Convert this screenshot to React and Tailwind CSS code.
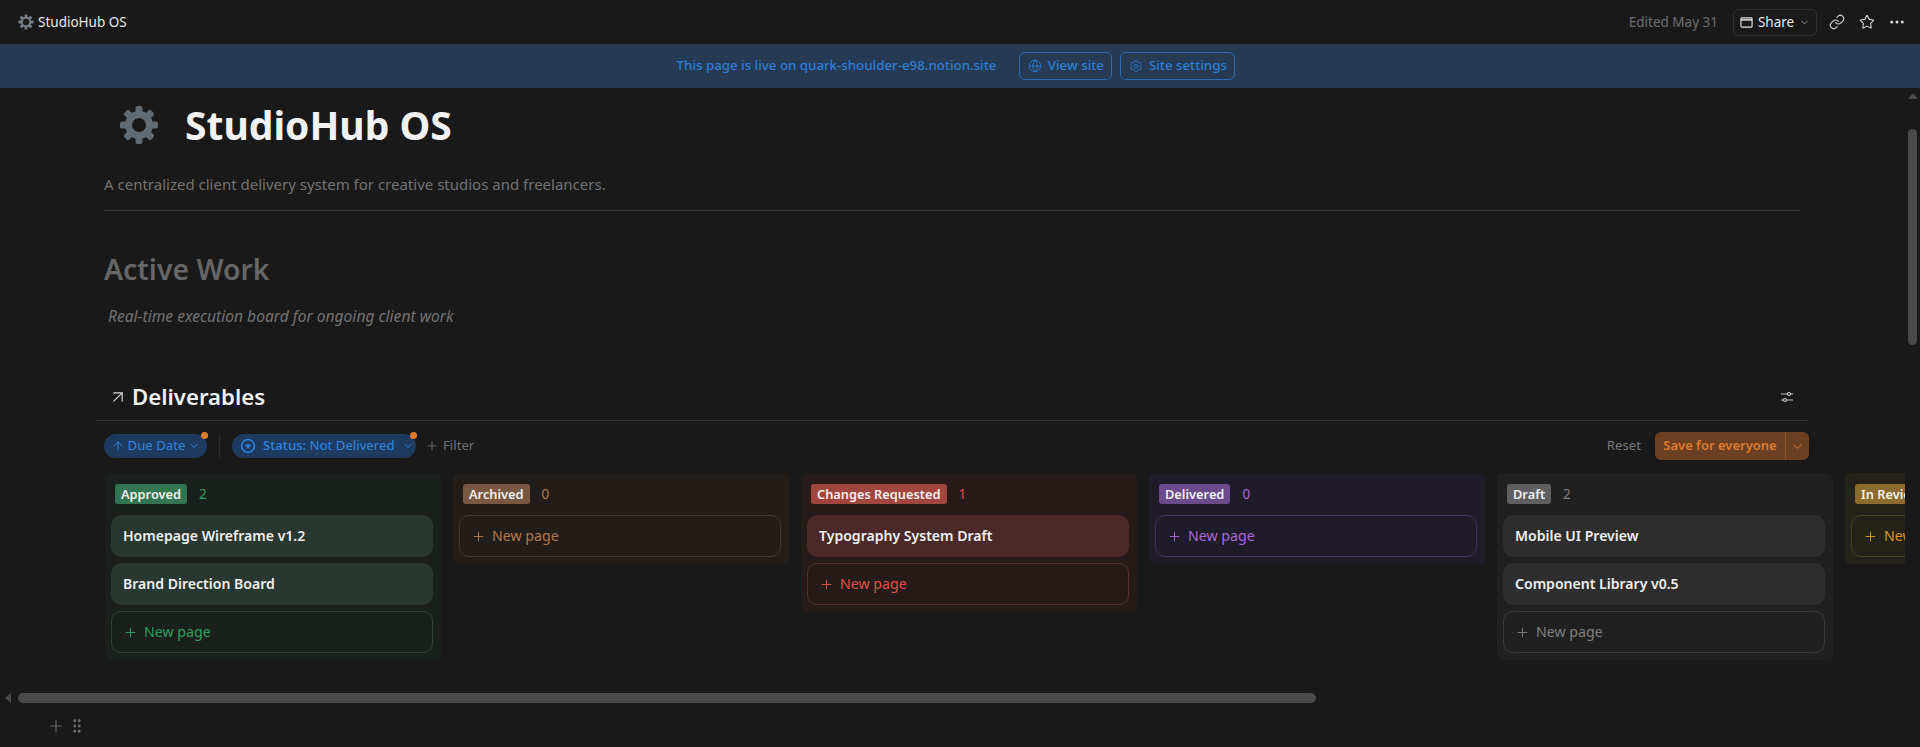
import { ArrowUp, ArrowUpRight, ChevronDown, Ellipsis, Globe, GripVertical, Link, Plus, Settings, Star } from "lucide-react";

const columns = [
  {
    name: "Approved",
    count: 2,
    cards: ["Homepage Wireframe v1.2", "Brand Direction Board"],
    col: "bg-[#1a211d]",
    label: "bg-[#337550]",
    card: "bg-[#283830]",
    border: "border-[#2b4135]",
    text: "text-[#2f9e5f]",
  },
  {
    name: "Archived",
    count: 0,
    cards: [],
    col: "bg-[#231d19]",
    label: "bg-[#7a5740]",
    card: "bg-[#3a2e26]",
    border: "border-[#44362b]",
    text: "text-[#b07a50]",
  },
  {
    name: "Changes Requested",
    count: 1,
    cards: ["Typography System Draft"],
    col: "bg-[#261b19]",
    label: "bg-[#a0463f]",
    card: "bg-[#4a2a28]",
    border: "border-[#552e2b]",
    text: "text-[#e0504a]",
  },
  {
    name: "Delivered",
    count: 0,
    cards: [],
    col: "bg-[#201b28]",
    label: "bg-[#6a4a8a]",
    card: "bg-[#3a2c4a]",
    border: "border-[#443063]",
    text: "text-[#a869dc]",
  },
  {
    name: "Draft",
    count: 2,
    cards: ["Mobile UI Preview", "Component Library v0.5"],
    col: "bg-[#202020]",
    label: "bg-[#5f5f5f]",
    card: "bg-[#2e2e2e]",
    border: "border-[#383838]",
    text: "text-[#7f7f7f]",
  },
  {
    name: "In Review",
    count: 1,
    cards: [],
    col: "bg-[#25221a]",
    label: "bg-[#8a6a2d]",
    card: "bg-[#3a3320]",
    border: "border-[#4a3f20]",
    text: "text-[#d89b25]",
  },
];

function Gear({ className, ring = 7 }) {
  const teeth = [0, 45, 90, 135, 180, 225, 270, 315];
  return (
    <svg viewBox="0 0 40 40" className={className} fill="currentColor">
      {teeth.map((angle) => (
        <rect key={angle} x="16.5" y="1" width="7" height="9" rx="2" transform={`rotate(${angle} 20 20)`} />
      ))}
      <circle cx="20" cy="20" r="10.5" fill="none" stroke="currentColor" strokeWidth={ring} />
    </svg>
  );
}

function BoardColumn({ column }) {
  return (
    <div className={`${column.col} w-[336px] shrink-0 self-start rounded-md pt-[11px] pl-[6px] pr-[8px] pb-[7px]`}>
      <div className="flex items-center h-5 pl-[4px] mb-[11px]">
        <span className={`${column.label} h-5 px-[6px] rounded-[3px] text-[12.8px] leading-5 font-semibold text-[#f0f0f0] whitespace-nowrap`}>
          {column.name}
        </span>
        <span className={`${column.text} ml-[12px] text-[13.5px] leading-5`}>{column.count}</span>
      </div>
      <div className="flex flex-col gap-[6px]">
        {column.cards.map((card) => (
          <div key={card} className={`${column.card} h-[42px] rounded-[10px] pl-3 pb-[1px] flex items-center text-[14.05px] font-semibold text-[#f0f0f0]`}>
            {card}
          </div>
        ))}
        <div className={`${column.border} ${column.text} h-[42px] rounded-[10px] border pl-[11px] flex items-center gap-[6px] text-[14.2px]`}>
          <Plus className="w-[15px] h-[15px]" strokeWidth={1.5} />
          New page
        </div>
      </div>
    </div>
  );
}

export default function App() {
  return (
    <div className="w-[1920px] h-[747px] overflow-hidden flex flex-col bg-[#191919] font-['Noto_Sans',sans-serif]">
      <header className="h-11 shrink-0 flex items-center pl-[18px] pr-[14px]">
        <Gear className="w-[16px] h-[16px] text-[#77808a]" ring={5} />
        <span className="ml-[4px] text-[13.5px] text-[#e8e8e8]">StudioHub OS</span>
        <span className="ml-auto text-[13.5px] text-[#6f6f6f]">Edited May 31</span>
        <div className="ml-[15px] w-[84px] h-[27px] rounded-md border border-[#2f2f2f] flex items-center justify-center gap-[5px] text-[13.5px] text-[#e8e8e8]">
          <svg viewBox="0 0 14 14" className="w-[13px] h-[13px]" fill="none" stroke="currentColor" strokeWidth="1.2">
            <rect x="1" y="2" width="12" height="10" rx="1" />
            <path d="M1 4.2h12" strokeWidth="1.6" />
          </svg>
          Share
          <ChevronDown className="w-[11px] h-[11px] text-[#9a9a9a]" />
        </div>
        <Link className="ml-[12px] w-4 h-4 text-[#d8d8d8]" strokeWidth={1.6} />
        <Star className="ml-[14px] w-4 h-4 text-[#d8d8d8]" strokeWidth={1.6} />
        <Ellipsis className="ml-[13px] w-[18px] h-[18px] text-[#d8d8d8]" strokeWidth={2} />
      </header>

      <div className="h-11 shrink-0 bg-[#253a53] flex items-center justify-center pr-[8px] text-[13.3px] font-medium text-[#2f7fd6]">
        <span>This page is live on quark-shoulder-e98.notion.site</span>
        <div className="ml-[23px] w-[93px] h-7 rounded-md border border-[#2f6cb0] flex items-center justify-center gap-[6px]">
          <Globe className="w-[14px] h-[14px]" strokeWidth={1.4} />
          View site
        </div>
        <div className="ml-[8px] w-[115px] h-7 rounded-md border border-[#2f6cb0] flex items-center justify-center gap-[6px]">
          <Settings className="w-[14px] h-[14px]" strokeWidth={1.4} />
          Site settings
        </div>
      </div>

      <div className="flex-1 min-h-0 flex">
        <main className="flex-1 min-w-0 flex flex-col">
          <div className="pl-[104px] pr-[107px]">
            <div className="h-[72px] flex items-center pl-[15px]">
              <Gear className="w-[40px] h-[40px] text-[#5f6b75] mt-[1px]" />
              <h1 className="ml-[26px] text-[39px] leading-none font-bold text-[#f2f2f2]">StudioHub OS</h1>
            </div>
            <p className="mt-[12px] text-[15px] leading-6 text-[#737373]">
              A centralized client delivery system for creative studios and freelancers.
            </p>
            <div className="mt-[14px] h-px bg-[#333333]" />
            <h2 className="mt-[38px] text-[28.4px] leading-10 font-semibold text-[#666666]">Active Work</h2>
            <p className="mt-[15px] pl-[4px] text-[15.6px] leading-6 italic text-[#737373]">Real-time execution board for ongoing client work</p>
          </div>

          <div className="mt-[52px] pl-[96px] pr-[99px]">
            <div className="h-[41px] flex items-center border-b border-[#333333] pb-[7px] pl-[14px] pr-[15px]">
              <ArrowUpRight className="w-[20px] h-[20px] -ml-[2px] text-[#d8d8d8]" strokeWidth={1.4} />
              <h3 className="ml-[4px] text-[22.2px] font-semibold text-[#f0f0f0]">Deliverables</h3>
              <svg viewBox="0 0 14 14" className="ml-auto w-[14px] h-[14px] text-[#c8c8c8]" fill="none" stroke="currentColor" strokeWidth="1.2">
                <path d="M1 4h6.5M10.5 4H13M1 10h2.5M6.5 10H13" />
                <circle cx="9" cy="4" r="1.5" />
                <circle cx="5" cy="10" r="1.5" />
              </svg>
            </div>
            <div className="h-[50px] flex items-center pl-[8px] text-[13.2px]">
              <div className="relative h-6 w-[103px] rounded-full bg-[#1f3a5f] text-[#3086e0] flex items-center justify-center gap-[3px]">
                <ArrowUp className="w-[14px] h-[14px]" strokeWidth={1.6} />
                Due Date
                <ChevronDown className="w-[12px] h-[12px]" />
                <span className="absolute right-[-1px] top-[-2px] w-[7px] h-[7px] rounded-full bg-[#e07b2c]" />
              </div>
              <div className="ml-3 w-px h-6 bg-[#2c2c2c]" />
              <div className="ml-3 relative h-6 w-[184px] rounded-full bg-[#1f3a5f] text-[#3086e0] flex items-center pl-[8px] gap-[7px]">
                <svg viewBox="0 0 16 16" className="w-[16px] h-[16px]" fill="none" stroke="currentColor" strokeWidth="1.4">
                  <circle cx="8" cy="8" r="6.5" />
                  <path d="M5 6.5h6L8 11z" fill="currentColor" stroke="none" />
                </svg>
                <span>
                  <span className="font-medium">Status:</span> Not Delivered
                </span>
                <ChevronDown className="w-[12px] h-[12px]" />
                <span className="absolute right-[-1px] top-[-2px] w-[7px] h-[7px] rounded-full bg-[#e07b2c]" />
              </div>
              <div className="ml-[9px] flex items-center gap-[4px] text-[#6f6f6f]">
                <Plus className="w-[14px] h-[14px]" strokeWidth={1.5} />
                Filter
              </div>
              <span className="ml-auto text-[#7a7a7a]">Reset</span>
              <div className="ml-[14px] h-7 w-[154px] rounded-md bg-[#6b3f22] text-[#e07b2c] text-[13px] font-semibold flex items-center">
                <span className="w-[130px] text-center">Save for everyone</span>
                <span className="w-px h-7 bg-[#8c5228]" />
                <ChevronDown className="ml-[4px] w-[15px] h-[15px]" strokeWidth={1.6} />
              </div>
            </div>
          </div>

          <div className="ml-[105px] mr-[3px] h-[187px] overflow-hidden flex gap-3 mt-[2px]">
            {columns.map((column) => (
              <BoardColumn key={column.name} column={column} />
            ))}
          </div>

          <div className="mt-[33px] h-[10px] flex items-center pl-[5px]">
            <span className="w-0 h-0 border-y-[5px] border-y-transparent border-r-[6px] border-r-[#4a4a4a]" />
            <div className="ml-[7px] w-[1298px] h-[10px] rounded-full bg-[#4a4a4a]" />
          </div>
          <div className="mt-[14px] flex items-center pl-[47px] text-[#6f6f6f]">
            <Plus className="w-[18px] h-[18px]" strokeWidth={1.5} />
            <GripVertical className="ml-[3px] w-[18px] h-[18px]" strokeWidth={1.7} />
          </div>
        </main>

        <aside className="w-3 shrink-0 flex flex-col items-center pr-[3px]">
          <span className="mt-[5px] w-0 h-0 border-x-[5px] border-x-transparent border-b-[6px] border-b-[#4a4a4a]" />
          <div className="mt-[30px] w-[9px] h-[216px] rounded-full bg-[#4a4a4a]" />
        </aside>
      </div>
    </div>
  );
}
